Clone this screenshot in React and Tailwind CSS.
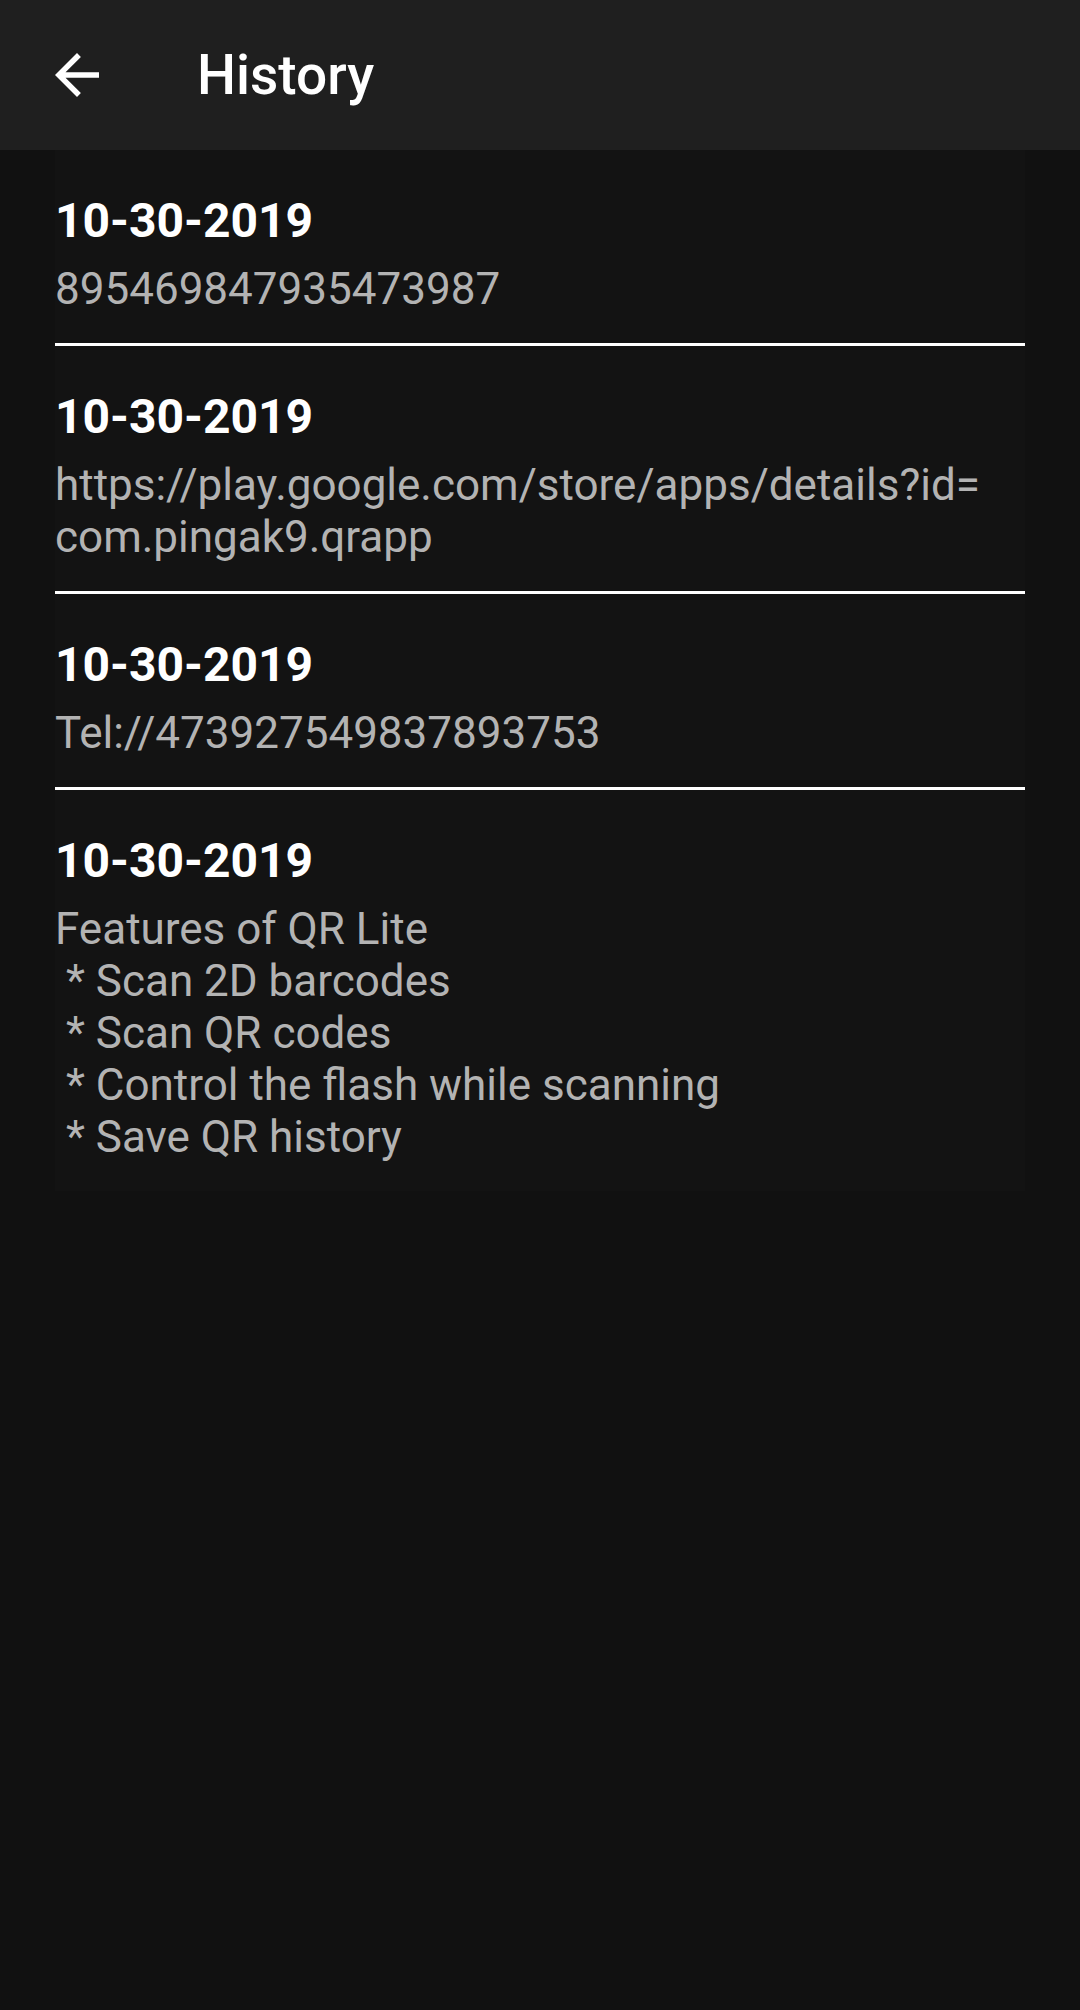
import React from 'react';

const entries = [
  { date: '10-30-2019', lines: ['895469847935473987'] },
  { date: '10-30-2019', lines: ['https://play.google.com/store/apps/details?id=', 'com.pingak9.qrapp'] },
  { date: '10-30-2019', lines: ['Tel://473927549837893753'] },
  {
    date: '10-30-2019',
    lines: [
      'Features of QR Lite',
      ' * Scan 2D barcodes',
      ' * Scan QR codes',
      ' * Control the flash while scanning',
      ' * Save QR history',
    ],
  },
];

function BackArrow() {
  return (
    <svg viewBox="0 0 24 24" className="w-[66px] h-[66px]" fill="#ffffff">
      <path d="M20 11H7.83l5.59-5.59L12 4l-8 8 8 8 1.41-1.41L7.83 13H20v-2z" />
    </svg>
  );
}

function HistoryItem({ item, last }) {
  return (
    <div className={last ? 'pt-[42px] pb-[28px]' : 'pt-[42px] pb-[28px] border-b-[3px] border-white'}>
      <div className="text-[48px] leading-[58px] font-bold text-white">{item.date}</div>
      <div className="mt-[13px] text-[44px] leading-[52px] text-[#b3b3b3] whitespace-pre-wrap">
        {item.lines.map((l, i) => (
          <div key={i}>{l}</div>
        ))}
      </div>
    </div>
  );
}

export default function App() {
  return (
    <div className="min-h-[2010px] bg-[#111111]" style={{ fontFamily: 'Roboto, "Noto Sans", sans-serif' }}>
      <div className="h-[150px] bg-[#1f1f1f] flex items-center">
        <div className="ml-[44px] w-[66px] h-[66px] flex items-center justify-center">
          <BackArrow />
        </div>
        <div className="ml-[87px] text-[55px] font-medium text-white leading-none">History</div>
      </div>
      <div className="mx-[55px] bg-[#131313]">
        {entries.map((item, i) => (
          <HistoryItem key={i} item={item} last={i === entries.length - 1} />
        ))}
      </div>
    </div>
  );
}
